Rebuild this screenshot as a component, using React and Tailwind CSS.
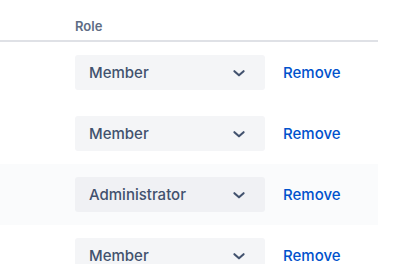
import React from 'react'

const ROWS = [
  { role: 'Member' },
  { role: 'Member' },
  { role: 'Administrator', hover: true },
  { role: 'Member' },
]

function Chevron() {
  return (
    <svg width="24" height="24" viewBox="0 0 24 24" className="shrink-0">
      <path
        d="M7.4 10.2l4.6 4.1 4.6-4.1"
        fill="none"
        stroke="#42526E"
        strokeWidth="2.1"
        strokeLinecap="round"
        strokeLinejoin="round"
      />
    </svg>
  )
}

export default function App() {
  return (
    <div className="w-[394px] h-[264px] overflow-hidden bg-white font-['Inter',sans-serif]">
      {/* Header */}
      <div className="w-[378px] h-[42px] border-b-2 border-[#DFE1E6] flex items-end pb-[7px] pl-[75px]">
        <span className="text-[13px] font-semibold text-[#5E6C84] leading-none">Role</span>
      </div>

      {ROWS.map((r, i) => (
        <div
          key={i}
          className={`w-[378px] h-[61px] flex items-center pl-[75px] ${r.hover ? 'bg-[#FAFBFC]' : ''}`}
        >
          <div
            className={`w-[190px] h-[35px] rounded-[3px] flex items-center justify-between pl-[14px] pr-[14px] ${
              r.hover ? 'bg-[#F0F1F4]' : 'bg-[#F4F5F7]'
            }`}
          >
            <span className="mt-[2px] text-[15px] font-medium text-[#42526E]">{r.role}</span>
            <Chevron />
          </div>
          <span className="mt-[2px] ml-[18px] text-[15px] font-medium text-[#0052CC]">Remove</span>
        </div>
      ))}
    </div>
  )
}
